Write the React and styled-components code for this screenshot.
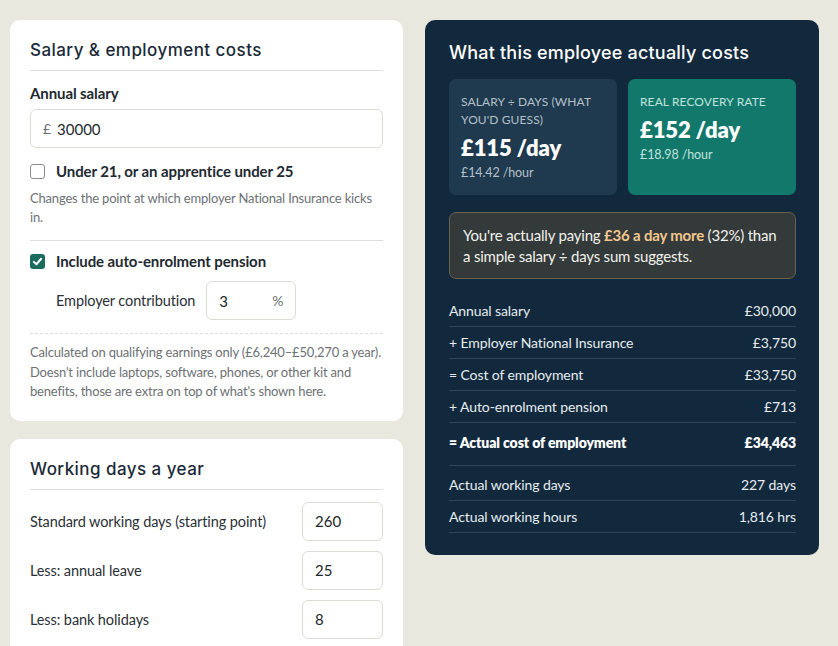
import styled, { createGlobalStyle } from 'styled-components';

const GlobalStyle = createGlobalStyle`
  body {
    margin: 0;
    background: #e9e8df;
    font-family: Lato, 'Liberation Sans', sans-serif;
    letter-spacing: -0.1px;
    color: #22292f;
  }
`;

const Page = styled.div`
  display: grid;
  grid-template-columns: 393px 394px;
  gap: 22px;
  align-items: start;
  padding: 20px 0 0 10px;
`;

const Column = styled.div`
  display: flex;
  flex-direction: column;
  gap: 18px;
`;

const Card = styled.section`
  background: #fff;
  border-radius: 10px;
  padding: 20px 20px 19px;
`;

const CardTitle = styled.h2`
  margin: 0;
  font-family: Inter, 'Open Sans', sans-serif;
  font-weight: 500;
  font-size: 17px;
  line-height: 21px;
  letter-spacing: 0.45px;
  color: #1b2a38;
  padding-bottom: 9px;
  border-bottom: 1px solid #dedfdb;
`;

const FieldLabel = styled.div`
  margin-top: 12px;
  font-size: 15px;
  line-height: 20px;
  font-weight: 700;
  color: #22292f;
`;

const FieldBox = styled.div`
  display: flex;
  align-items: center;
  gap: 6px;
  box-sizing: border-box;
  height: 39px;
  width: ${(p) => p.width || '100%'};
  margin-top: ${(p) => p.top || 0}px;
  padding: 0 12px;
  border: 1px solid #dcdcd5;
  border-radius: 6px;
  background: #fff;
`;

const Affix = styled.span`
  font-size: 14px;
  color: #6b6f72;
`;

const FieldInput = styled.input`
  flex: 1;
  min-width: 0;
  border: 0;
  outline: none;
  padding: 0;
  font-family: inherit;
  font-size: 15px;
  color: #22292f;
  background: transparent;
`;

const CheckRow = styled.label`
  display: flex;
  align-items: center;
  gap: 11px;
  margin-top: ${(p) => p.top}px;
  font-size: 15px;
  line-height: 20px;
  font-weight: 700;
`;

const Box = styled.span`
  display: flex;
  align-items: center;
  justify-content: center;
  box-sizing: border-box;
  width: 15px;
  height: 15px;
  border-radius: 3px;
  border: ${(p) => (p.checked ? '0' : '1.5px solid #8a8d8f')};
  background: ${(p) => (p.checked ? '#1c6b5f' : '#fff')};
`;

const Help = styled.p`
  margin: ${(p) => p.top}px 0 0;
  font-size: 13px;
  line-height: ${(p) => p.lh || 19}px;
  letter-spacing: -0.18px;
  color: #6d7174;
`;

const Rule = styled.hr`
  margin: ${(p) => p.top}px 0 0;
  border: 0;
  border-top: 1px ${(p) => (p.dashed ? 'dashed' : 'solid')} #dedfdb;
`;

const InlineField = styled.div`
  display: flex;
  align-items: center;
  gap: 11px;
  margin-top: 10px;
  padding-left: 26px;
  font-size: 14.5px;
  color: #2a3036;
`;

const DayRow = styled.div`
  display: flex;
  align-items: center;
  justify-content: space-between;
  margin-top: ${(p) => p.top}px;
  font-size: 14.5px;
  color: #2a3036;
`;

const Panel = styled.section`
  background: #12293d;
  border-radius: 10px;
  padding: 22px 23px 22px 24px;
  color: #e8eef1;
`;

const PanelTitle = styled.h2`
  margin: 0;
  font-family: Inter, 'Open Sans', sans-serif;
  font-weight: 500;
  font-size: 18px;
  line-height: 22px;
  letter-spacing: 0.2px;
  color: #fff;
`;

const Stats = styled.div`
  display: grid;
  grid-template-columns: 1fr 1fr;
  gap: 11px;
  margin-top: 15px;
`;

const Stat = styled.div`
  border-radius: 7px;
  height: 116px;
  box-sizing: border-box;
  padding: 14px 12px;
  background: ${(p) => (p.accent ? '#13786c' : '#1f394e')};
`;

const StatLabel = styled.div`
  font-size: 12px;
  line-height: 18px;
  text-transform: uppercase;
  letter-spacing: 0.1px;
  color: ${(p) => (p.accent ? '#bfe3dc' : '#b3c0ca')};
`;

const StatValue = styled.div`
  margin-top: 5px;
  font-size: 22px;
  line-height: 28px;
  font-weight: 800;
  color: #fff;
`;

const StatSub = styled.div`
  margin-top: 2px;
  font-size: 12.5px;
  line-height: 18px;
  color: ${(p) => (p.accent ? '#bfe3dc' : '#b3c0ca')};
`;

const Callout = styled.div`
  margin-top: 17px;
  padding: 12px 13px 11px;
  border: 1px solid #6a614c;
  border-radius: 7px;
  background: #34393a;
  font-size: 15px;
  line-height: 21px;
  letter-spacing: -0.2px;
  color: #f1f1ec;
  strong {
    color: #f3c78d;
    font-weight: 700;
  }
`;

const Table = styled.div`
  margin-top: 16px;
`;

const Line = styled.div`
  display: flex;
  justify-content: space-between;
  font-size: 14px;
  line-height: 17px;
  padding: ${(p) => p.pad || '7px 0'};
  border-bottom: 1px solid rgba(255, 255, 255, 0.13);
  font-weight: ${(p) => (p.bold ? 800 : 400)};
  color: ${(p) => (p.bold ? '#fff' : '#e6ecef')};
`;

const Check = () => (
  <svg width="11" height="11" viewBox="0 0 12 12">
    <path d="M2 6.4 L4.8 9 L10 3" fill="none" stroke="#fff" strokeWidth="2.2" strokeLinecap="round" strokeLinejoin="round" />
  </svg>
);

const breakdown = [
  ['Annual salary', '£30,000'],
  ['+ Employer National Insurance', '£3,750'],
  ['= Cost of employment', '£33,750'],
  ['+ Auto-enrolment pension', '£713'],
];

const App = () => {
  return (
    <>
      <GlobalStyle />
      <Page>
        <Column>
          <Card>
            <CardTitle>Salary &amp; employment costs</CardTitle>
            <FieldLabel>Annual salary</FieldLabel>
            <FieldBox top={6}>
              <Affix>£</Affix>
              <FieldInput defaultValue="30000" />
            </FieldBox>
            <CheckRow top={13}>
              <Box />
              Under 21, or an apprentice under 25
            </CheckRow>
            <Help top={8}>
              Changes the point at which employer National Insurance kicks in.
            </Help>
            <Rule top={13} />
            <CheckRow top={10}>
              <Box checked>
                <Check />
              </Box>
              Include auto-enrolment pension
            </CheckRow>
            <InlineField>
              Employer contribution
              <FieldBox width="90px">
                <FieldInput defaultValue="3" />
                <Affix>%</Affix>
              </FieldBox>
            </InlineField>
            <Rule dashed top={13} />
            <Help top={9} lh={19.5}>
              Calculated on qualifying earnings only (£6,240–£50,270 a year).
              Doesn't include laptops, software, phones, or other kit and
              benefits, those are extra on top of what's shown here.
            </Help>
          </Card>
          <Card>
            <CardTitle>Working days a year</CardTitle>
            <DayRow top={12}>
              Standard working days (starting point)
              <FieldBox width="81px">
                <FieldInput defaultValue="260" />
              </FieldBox>
            </DayRow>
            <DayRow top={10}>
              Less: annual leave
              <FieldBox width="81px">
                <FieldInput defaultValue="25" />
              </FieldBox>
            </DayRow>
            <DayRow top={10}>
              Less: bank holidays
              <FieldBox width="81px">
                <FieldInput defaultValue="8" />
              </FieldBox>
            </DayRow>
          </Card>
        </Column>

        <Panel>
          <PanelTitle>What this employee actually costs</PanelTitle>
          <Stats>
            <Stat>
              <StatLabel>Salary ÷ days (what you'd guess)</StatLabel>
              <StatValue>£115 /day</StatValue>
              <StatSub>£14.42 /hour</StatSub>
            </Stat>
            <Stat accent>
              <StatLabel accent>Real recovery rate</StatLabel>
              <StatValue>£152 /day</StatValue>
              <StatSub accent>£18.98 /hour</StatSub>
            </Stat>
          </Stats>
          <Callout>
            You're actually paying <strong>£36 a day more</strong> (32%) than a
            simple salary ÷ days sum suggests.
          </Callout>
          <Table>
            {breakdown.map(([label, value]) => (
              <Line key={label}>
                <span>{label}</span>
                <span>{value}</span>
              </Line>
            ))}
            <Line bold pad="11px 0 14px">
              <span>= Actual cost of employment</span>
              <span>£34,463</span>
            </Line>
            <Line pad="10px 0 7px">
              <span>Actual working days</span>
              <span>227 days</span>
            </Line>
            <Line>
              <span>Actual working hours</span>
              <span>1,816 hrs</span>
            </Line>
          </Table>
        </Panel>
      </Page>
    </>
  );
};

export default App;
